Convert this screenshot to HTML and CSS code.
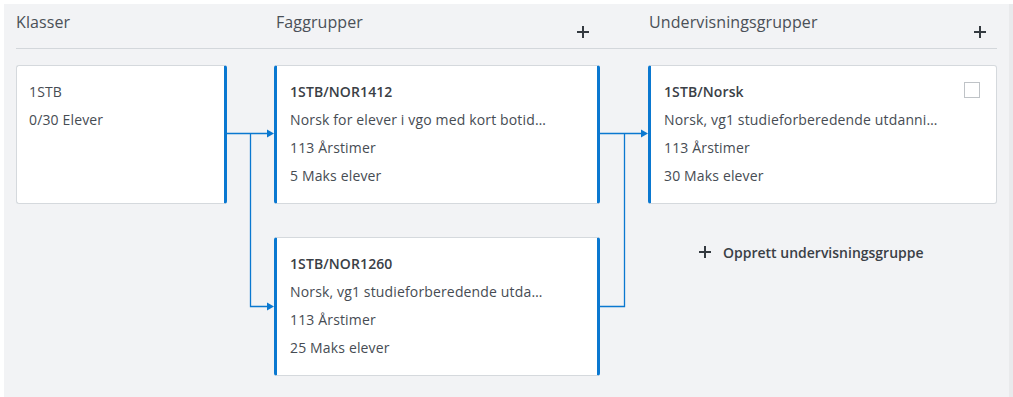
FILE: index.html
```html
<!DOCTYPE html>
<html lang="no">
<head>
<meta charset="utf-8">
<link rel="stylesheet" href="styles.css">
</head>
<body>
<div class="panel">
  <div class="header">
    <div class="head head-klasser"><span class="title">Klasser</span></div>
    <div class="head-gap"></div>
    <div class="head head-fag"><span class="title">Faggrupper</span>
      <svg class="plus" width="12" height="12" viewBox="0 0 12 12"><path d="M6 0V12M0 6H12" stroke="#343a40" stroke-width="2"/></svg>
    </div>
    <div class="head-gap"></div>
    <div class="head head-und"><span class="title">Undervisningsgrupper</span>
      <svg class="plus" width="12" height="12" viewBox="0 0 12 12"><path d="M6 0V12M0 6H12" stroke="#343a40" stroke-width="2"/></svg>
    </div>
  </div>
  <div class="board">
    <div class="card card-klasse">
      <div class="line">1STB</div>
      <div class="line">0/30 Elever</div>
    </div>
    <div class="conn conn-1">
      <svg width="47" height="311" viewBox="0 0 47 311">
        <path d="M0 68.5H41M23.5 68.5V241.5H41" fill="none" stroke="#0a78d0" stroke-width="1.3"/>
        <path d="M40 64.5L47 68.5L40 72.5Z" fill="#0a78d0"/>
        <path d="M40 237.5L47 241.5L40 245.5Z" fill="#0a78d0"/>
      </svg>
    </div>
    <div class="card card-fag fag-1">
      <div class="line bold">1STB/NOR1412</div>
      <div class="line">Norsk for elever i vgo med kort botid…</div>
      <div class="line">113 Årstimer</div>
      <div class="line">5 Maks elever</div>
    </div>
    <div class="conn conn-2">
      <svg width="48" height="311" viewBox="0 0 48 311">
        <path d="M0 68.5H42M24.5 68.5V241.5H0" fill="none" stroke="#0a78d0" stroke-width="1.3"/>
        <path d="M41 64.5L48 68.5L41 72.5Z" fill="#0a78d0"/>
      </svg>
    </div>
    <div class="card card-und">
      <div class="line bold">1STB/Norsk</div>
      <div class="line">Norsk, vg1 studieforberedende utdanni…</div>
      <div class="line">113 Årstimer</div>
      <div class="line">30 Maks elever</div>
      <span class="checkbox"></span>
    </div>
    <div class="card card-fag fag-2">
      <div class="line bold">1STB/NOR1260</div>
      <div class="line">Norsk, vg1 studieforberedende utda…</div>
      <div class="line">113 Årstimer</div>
      <div class="line">25 Maks elever</div>
    </div>
    <div class="create">
      <svg width="12" height="12" viewBox="0 0 12 12"><path d="M6 0V12M0 6H12" stroke="#343a40" stroke-width="2"/></svg>
      <span>Opprett undervisningsgruppe</span>
    </div>
  </div>
</div>
</body>
</html>
```

FILE: styles.css
```css
html, body {
  margin: 0;
  padding: 0;
  background: #ffffff;
}
body {
  font-family: "Open Sans", "Noto Sans", sans-serif;
  color: #454b52;
}
.panel {
  margin: 4px 0 0 4px;
  width: 1009px;
  height: 393px;
  background: #f2f3f5;
  border-right: 4px solid #e9eaec;
  padding: 0 12px;
  box-sizing: border-box;
}
.header {
  display: grid;
  grid-template-columns: 211px 47px 326px 48px 349px;
  height: 44px;
  border-bottom: 1px solid #d3d7db;
}
.head {
  display: flex;
  justify-content: space-between;
  align-items: flex-start;
  padding-top: 6px;
  box-sizing: border-box;
}
.title {
  font-size: 16px;
  line-height: 24px;
  color: #4a5057;
  letter-spacing: 0.1px;
}
.head-fag .title { padding-left: 2px; }
.head-und .title { padding-left: 1px; }
.plus {
  margin-top: 16px;
}
.head-fag .plus { margin-right: 11px; }
.head-und .plus { margin-right: 11px; }
.board {
  display: grid;
  grid-template-columns: 211px 47px 326px 48px 349px;
  grid-template-rows: 139px 139px;
  row-gap: 33px;
  margin-top: 16px;
}
.card {
  position: relative;
  background: #ffffff;
  border: 1px solid #d5d9dd;
  border-radius: 3px;
  padding: 12px;
  box-sizing: border-box;
  min-width: 0;
}
.card-klasse {
  grid-column: 1;
  grid-row: 1;
  border-right: 3px solid #0a78d0;
}
.card-fag {
  grid-column: 3;
  border-left: 3px solid #0a78d0;
  border-right: 3px solid #0a78d0;
}
.fag-1 { grid-row: 1; }
.fag-2 { grid-row: 2; }
.card-und {
  grid-column: 5;
  grid-row: 1;
  border-left: 3px solid #0a78d0;
}
.line {
  font-size: 14px;
  line-height: 28px;
  white-space: nowrap;
  overflow: hidden;
  color: #464c53;
  letter-spacing: 0.15px;
}
.card-fag .line, .card-und .line { padding-left: 1px; }
.bold {
  font-weight: 600;
  color: #3a4046;
  letter-spacing: 0.1px;
}
.checkbox {
  position: absolute;
  top: 16px;
  right: 16px;
  width: 16px;
  height: 16px;
  box-sizing: border-box;
  border: 1px solid #bfc3c7;
  background: #ffffff;
}
.conn {
  grid-row: 1 / span 2;
  align-self: start;
  height: 311px;
}
.conn svg { display: block; }
.conn-1 { grid-column: 2; }
.conn-2 { grid-column: 4; }
.create {
  grid-column: 5;
  grid-row: 2;
  align-self: start;
  display: flex;
  align-items: center;
  gap: 12px;
  padding-left: 51px;
  margin-top: 1px;
  height: 28px;
  font-size: 14px;
  font-weight: 600;
  color: #3a4046;
}
```
